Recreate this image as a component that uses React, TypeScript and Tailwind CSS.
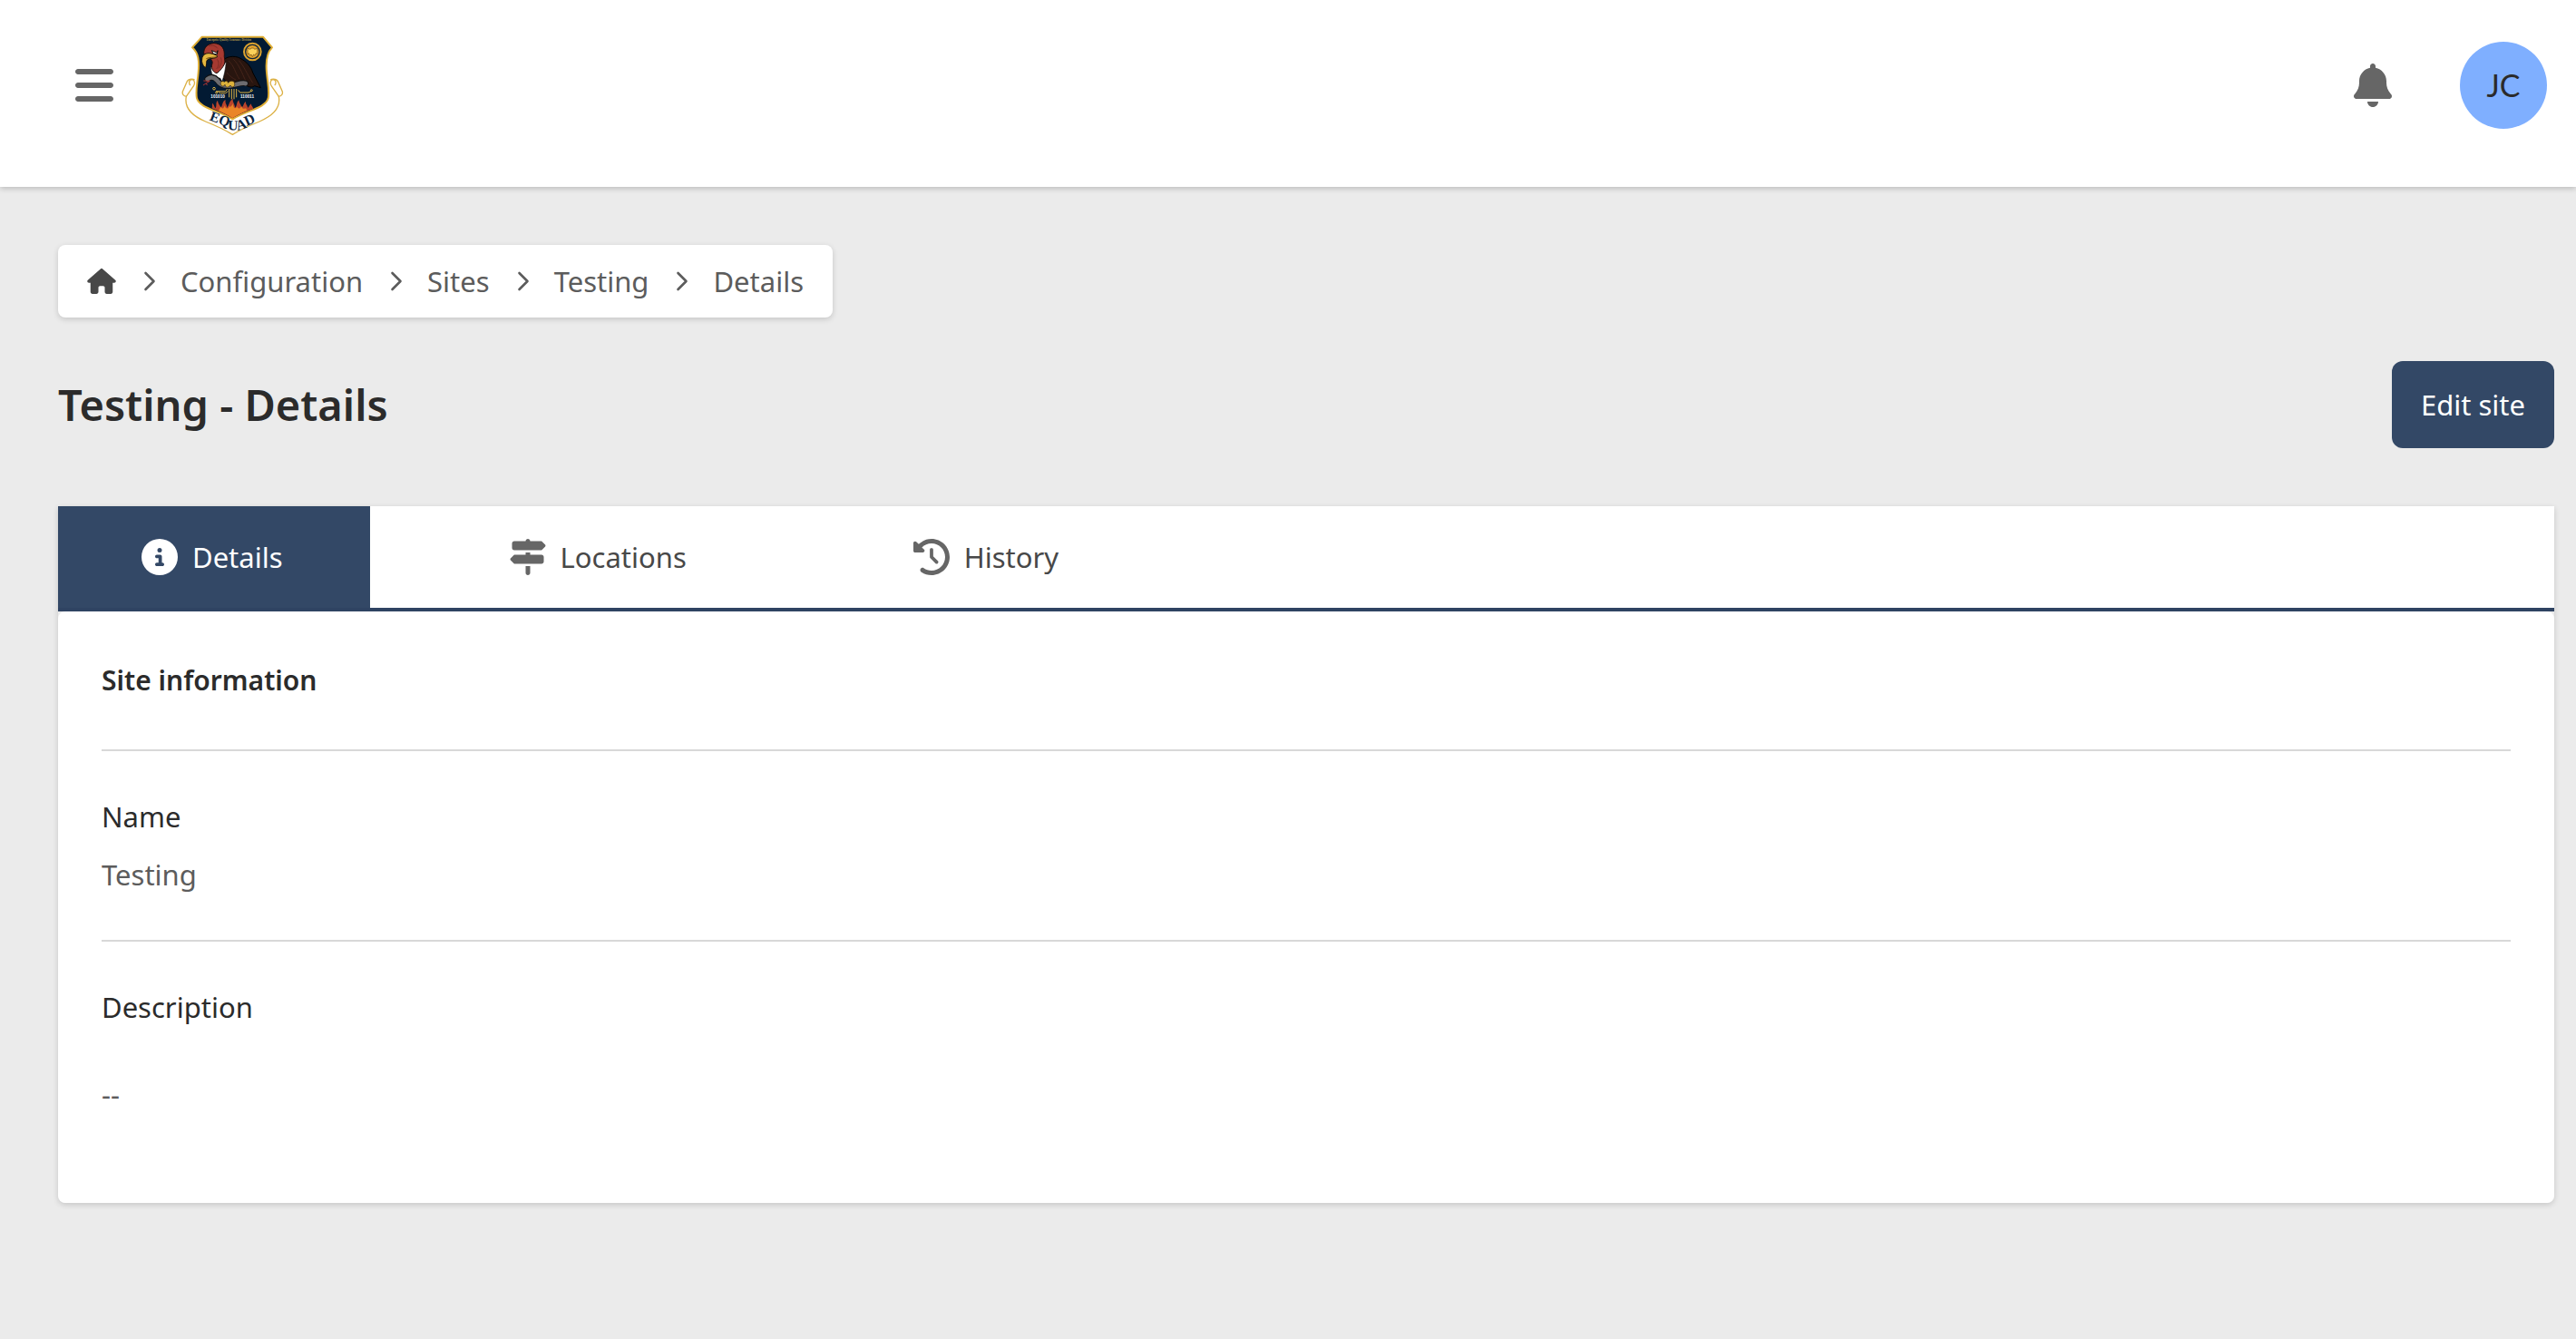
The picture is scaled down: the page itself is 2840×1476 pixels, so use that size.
import React from 'react'
import { FaBars, FaBell, FaCircleInfo, FaClockRotateLeft, FaHouse, FaSignsPost } from 'react-icons/fa6'

const crumbs = ['Configuration', 'Sites', 'Testing', 'Details']

const tabs = [
  { label: 'Details', icon: FaCircleInfo, active: true },
  { label: 'Locations', icon: FaSignsPost, active: false },
  { label: 'History', icon: FaClockRotateLeft, active: false },
]

function Chevron() {
  return (
    <svg viewBox="0 0 16 24" className="h-6 w-4" fill="none" stroke="currentColor" strokeWidth="2.6" strokeLinecap="round" strokeLinejoin="round" aria-hidden="true">
      <path d="M4.5 3 L13.5 12 L4.5 21" />
    </svg>
  )
}

function Logo() {
  return (
    <svg viewBox="0 0 450 444" className="w-[150px] h-[148px]" role="img" aria-label="EQUAD">
      {/* ribbon */}
      <path
        d="M104 205 C96 198 80 201 77 213 L64 243 C62 252 68 258 76 259 C68 300 100 325 140 342 C175 356 205 370 229 385 C253 370 283 356 318 342 C358 325 390 300 382 259 C390 258 396 252 394 243 L381 213 C378 201 362 198 354 205"
        fill="#fff"
        stroke="#dcb145"
        strokeWidth="4"
      />
      <path
        d="M76 259 L100 225 C106 214 104 204 94 203 C84 204 84 218 90 222 M382 259 L358 225 C352 214 354 204 364 203 C374 204 374 218 368 222"
        fill="none"
        stroke="#dcb145"
        strokeWidth="4"
      />
      {/* shield */}
      <path
        d="M128 62 L330 62 L360 97 C342 115 338 140 342 180 C345 215 352 240 347 265 C338 298 275 305 229 334 C183 305 120 298 111 265 C106 240 113 215 116 180 C120 140 116 115 96 97 Z"
        fill="#021a33"
        stroke="#dfae35"
        strokeWidth="6"
        strokeLinejoin="round"
      />
      {/* flames */}
      <path
        d="M160 298 C164 292 160 288 163 281 C170 288 168 294 173 298 C178 286 172 280 180 272 C181 286 190 288 190 298 C197 288 194 276 206 270 C203 284 212 286 211 296 C219 286 216 278 230 266 C229 280 238 284 237 296 C246 290 240 280 250 271 C251 284 260 286 258 297 C266 292 264 282 273 275 C271 286 280 288 279 297 C286 292 284 288 291 283 C290 292 298 293 297 300 C270 309 250 319 229 331 C207 318 185 309 160 298 Z"
        fill="#b9432b"
      />
      <path
        d="M182 305 C188 302 188 298 189 292 C194 302 201 300 203 288 C206 302 216 302 218 290 C222 298 228 288 230 282 C231 296 238 304 244 292 C247 302 255 300 259 290 C261 302 268 300 274 298 C274 302 276 303 278 305 C258 313 246 320 229 330 C212 320 200 313 182 305 Z"
        fill="#ea8527"
      />
      {/* circuit traces */}
      <g fill="none" stroke="#dcb145" strokeWidth="3">
        <path d="M218 234 V262 M226 234 V268 M234 234 V268 M242 234 V262 M212 234 L206 242 H174 M214 242 L206 248 H190 L182 245 M248 238 L254 246 H282 L292 241" />
        <circle cx="168" cy="233" r="4" />
        <circle cx="176" cy="246" r="3" />
        <circle cx="292" cy="239" r="3" />
      </g>
      <text x="157" y="263" fill="#fff" fontSize="14" className="font-['Liberation_Sans',sans-serif] font-bold">101010</text>
      <text x="255" y="263" fill="#fff" fontSize="14" className="font-['Liberation_Sans',sans-serif] font-bold">110011</text>
      {/* vulture */}
      <path
        d="M196 144 C204 126 236 122 255 133 C276 144 290 160 296 180 L322 230 L302 224 C295 230 284 229 276 223 L250 212 C225 218 206 212 196 196 Z"
        fill="#28150f"
        stroke="#000"
        strokeWidth="3"
      />
      <path
        d="M216 141 C236 160 236 178 252 202 M232 136 C252 155 258 178 274 210 M250 140 C268 160 274 180 296 214 M210 180 C220 192 228 198 240 204"
        fill="none"
        stroke="#45241a"
        strokeWidth="3"
      />
      <path
        d="M158 162 C156 178 164 186 162 196 L174 190 L178 206 L188 198 L194 211 C202 190 206 166 208 146 Z"
        fill="#fff"
        stroke="#111"
        strokeWidth="2"
      />
      <path
        d="M134 118 C133 98 146 84 168 83 C190 84 202 98 202 118 C200 130 206 140 203 150 C196 166 184 178 177 182 C166 180 158 168 161 153 C166 143 158 136 150 128 Z"
        fill="#a63a31"
        stroke="#1b0d0c"
        strokeWidth="3"
      />
      <path d="M150 92 C162 88 174 92 180 100 M178 136 C186 146 184 158 176 168 M190 130 C196 144 190 158 182 166" fill="none" stroke="#802c25" strokeWidth="3" />
      <path
        d="M128 135 C129 121 142 113 158 117 C166 119 176 121 180 127 C174 134 158 132 148 136 C139 142 146 154 139 164 C130 156 126 146 128 135 Z"
        fill="#e4b740"
        stroke="#181008"
        strokeWidth="3"
      />
      <path d="M142 134 C154 128 166 131 178 128" fill="none" stroke="#704d14" strokeWidth="3" />
      <path d="M160 107 L178 115 L180 107 L178 120 L166 118 Z" fill="#fff" stroke="#111" strokeWidth="3" />
      {/* snake */}
      <path
        d="M146 202 C156 192 168 194 178 204 C186 218 196 224 214 223 C240 222 258 210 272 215"
        fill="none"
        stroke="#111"
        strokeWidth="20"
        strokeLinecap="round"
      />
      <path
        d="M146 202 C156 193 168 195 177 205 C186 219 198 225 214 224 C240 223 258 211 272 216"
        fill="none"
        stroke="#6c6c70"
        strokeWidth="14"
        strokeLinecap="round"
      />
      <path d="M133 207 L154 208 L142 215 L132 222 M142 215 L145 222" fill="none" stroke="#ac3434" strokeWidth="3" />
      <path
        d="M190 218 C188 210 196 206 202 211 C208 205 214 208 214 214 C222 205 236 206 236 216 C238 228 226 232 222 222 C214 232 206 230 204 220 C200 228 192 226 190 218 Z"
        fill="#dcb23c"
        stroke="#33230c"
        strokeWidth="2"
      />
      {/* seal */}
      <circle cx="295" cy="111" r="28" fill="#11253a" stroke="#dda32e" strokeWidth="6" />
      <circle cx="295" cy="111" r="21" fill="#e5a42e" />
      <path
        d="M279 100 L288 103 L291 99 L299 99 L302 103 L311 100 L311 120 L307 116 L303 124 L299 120 L295 128 L291 120 L287 124 L283 116 L279 120 Z"
        fill="#fbd15b"
        stroke="#6f4b16"
        strokeWidth="2"
      />
      <text x="143" y="75" fill="#b59a4b" fontSize="9" className="font-['Liberation_Serif',serif] font-bold">
        Enterprise Quality Assurance Division
      </text>
      <text
        x="151 180 213 246 276"
        y="337 348 370 372 357"
        rotate="20 20 2 -18 -24"
        fill="#0b2440"
        fontSize="47"
        className="font-['Liberation_Serif',serif] font-bold"
      >
        EQUAD
      </text>
    </svg>
  )
}

export default function App() {
  return (
    <div className="min-h-screen bg-[#ebebeb] font-['Noto_Sans',sans-serif] text-[31px] leading-[48px] text-[#2b2b2b]">
      <header className="flex items-center justify-between bg-white pt-5 pb-[38px] pl-20 pr-8 shadow-[0_2px_6px_rgba(0,0,0,0.2)]">
        <div className="flex items-center gap-13">
          <button aria-label="Open menu" className="flex w-12 justify-center text-[#666]">
            <FaBars className="h-12 w-auto" />
          </button>
          <a href="#" aria-label="Home">
            <Logo />
          </a>
        </div>
        <div className="flex items-center gap-18">
          <button aria-label="Notifications" className="text-[#666]">
            <FaBell className="h-12 w-auto" />
          </button>
          <button className="size-24 rounded-full bg-[#7fafff] font-['Lato',sans-serif] text-[34px]">JC</button>
        </div>
      </header>

      <main className="pt-16 pr-6 pb-16 pl-16">
        <nav aria-label="Breadcrumb" className="flex w-fit rounded-lg bg-white px-8 py-4 text-[#5c5c5c] shadow-[0_2px_6px_rgba(0,0,0,0.16)]">
          <ol className="flex items-center gap-7">
            <li>
              <a href="#" aria-label="Home" className="text-[#484848]">
                <FaHouse className="h-7 w-8" />
              </a>
            </li>
            {crumbs.map((crumb) => (
              <li key={crumb} className="flex items-center gap-[27px]">
                <Chevron />
                <a href="#">{crumb}</a>
              </li>
            ))}
          </ol>
        </nav>

        <div className="mt-12 flex items-center justify-between">
          <h1 className="text-[47px] leading-[64px] font-semibold">Testing - Details</h1>
          <button className="rounded-xl bg-[#334866] px-8 py-6 text-white">Edit site</button>
        </div>

        <section className="mt-16 rounded-b-lg shadow-[0_2px_6px_rgba(0,0,0,0.16)]">
          <div role="tablist" className="flex gap-[62px] border-b-4 border-[#2f4362] bg-white">
            {tabs.map(({ label, icon: Icon, active }) => (
              <button
                key={label}
                role="tab"
                aria-selected={active}
                className={`flex items-center gap-4 py-8 pl-23 pr-24 ${active ? 'bg-[#334866] text-white' : 'text-[#484848]'}`}
              >
                <Icon className={`size-10 ${active ? 'text-white' : 'text-[#666]'}`} />
                {label}
              </button>
            ))}
          </div>

          <div className="rounded-lg bg-white p-12">
            <h2 className="text-[30px] leading-[56px] font-semibold">Site information</h2>
            <dl>
              <div className="mt-12 border-t-2 border-[#d8d8d8] pt-12">
                <dt>Name</dt>
                <dd className="mt-4 text-[#5c5c5c]">Testing</dd>
              </div>
              <div className="mt-12 border-t-2 border-[#d8d8d8] pt-12">
                <dt>Description</dt>
                <dd className="my-12 text-[#5c5c5c]">--</dd>
              </div>
            </dl>
          </div>
        </section>
      </main>
    </div>
  )
}
